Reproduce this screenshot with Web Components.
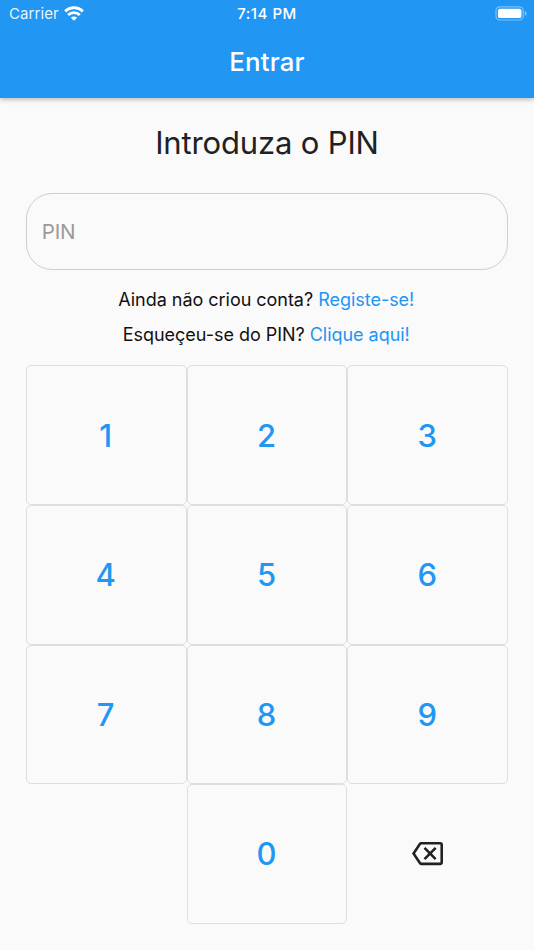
<!DOCTYPE html>
<html lang="pt">
<head>
<meta charset="UTF-8">
<meta name="viewport" content="width=device-width, initial-scale=1">
<title>Entrar</title>
<style>
  body {
    margin: 0;
    background: #fafafa;
    font-family: Inter, "Liberation Sans", sans-serif;
  }
</style>
</head>
<body>
<login-page></login-page>

<script>
class StatusBar extends HTMLElement {
  connectedCallback() {
    const shadow = this.attachShadow({ mode: "open" });
    shadow.innerHTML = `
      <style>
        :host {
          display: grid;
          grid-template-columns: 1fr auto 1fr;
          align-items: center;
          height: 28px;
          padding: 0 7px 0 9px;
          color: #fff;
          font-size: 15px;
          line-height: 28px;
        }
        .carrier {
          display: flex;
          align-items: center;
          gap: 5px;
          color: rgba(255, 255, 255, 0.92);
          letter-spacing: 0.1px;
        }
        .time {
          margin-right: 2px;
          font-weight: 500;
          font-size: 15px;
          letter-spacing: 0.5px;
        }
        .battery {
          justify-self: end;
        }
        svg {
          display: block;
        }
      </style>
      <div class="carrier">
        <span>${this.getAttribute("carrier")}</span>
        <svg width="20" height="16" viewBox="0 0 20 16" fill="none" stroke="#fff" stroke-width="2.9">
          <path d="M1.2 5.4a12.5 12.5 0 0 1 17.6 0" />
          <path d="M4.2 9a8.2 8.2 0 0 1 11.6 0" />
          <path d="M10 14.8l-3.1-3.1a4.4 4.4 0 0 1 6.2 0z" fill="#fff" stroke="none" />
        </svg>
      </div>
      <div class="time">${this.getAttribute("time")}</div>
      <svg class="battery" width="32" height="16" viewBox="0 0 32 16">
        <rect x="1" y=".8" width="27.2" height="13.2" rx="3.8" fill="none" stroke="#fff" stroke-opacity=".42" stroke-width="1.2" />
        <rect x="2.9" y="2.7" width="23.6" height="9.4" rx="2.2" fill="#fff" />
        <path d="M29.9 5.1a2.6 2.6 0 0 1 0 4.8z" fill="#fff" fill-opacity=".5" />
      </svg>
    `;
  }
}

class AppBar extends HTMLElement {
  connectedCallback() {
    const shadow = this.attachShadow({ mode: "open" });
    shadow.innerHTML = `
      <style>
        :host {
          display: block;
          height: 98px;
          background: #2196f3;
          box-shadow: 0 1px 6px rgba(0, 0, 0, 0.22), 0 2px 3px rgba(0, 0, 0, 0.08);
        }
        h1 {
          margin: 0;
          height: 70px;
          line-height: 68px;
          text-align: center;
          color: #fff;
          font-size: 25.8px;
          font-weight: 500;
          letter-spacing: 0.2px;
        }
      </style>
      <slot name="status"></slot>
      <h1><slot></slot></h1>
    `;
  }
}

class PinField extends HTMLElement {
  connectedCallback() {
    const shadow = this.attachShadow({ mode: "open" });
    shadow.innerHTML = `
      <style>
        :host {
          display: flex;
          align-items: center;
          box-sizing: border-box;
          height: 77px;
          padding: 0 15px;
          border: 1px solid #cfcfcf;
          border-radius: 26px;
          color: #9b9b9b;
          font-size: 20.6px;
          letter-spacing: -0.2px;
        }
      </style>
      <span>${this.getAttribute("placeholder")}</span>
    `;
  }
}

class HelpLine extends HTMLElement {
  connectedCallback() {
    const shadow = this.attachShadow({ mode: "open" });
    shadow.innerHTML = `
      <style>
        :host {
          display: block;
          height: 35px;
          padding-right: 1.5px;
          line-height: 35px;
          text-align: center;
          white-space: nowrap;
          color: #111;
          font-size: 18px;
          letter-spacing: -0.03px;
        }
        a {
          color: #2196f3;
          text-decoration: none;
        }
      </style>
      <slot></slot> <a href="#">${this.getAttribute("action")}</a>
    `;
  }
}

class PinKey extends HTMLElement {
  connectedCallback() {
    const shadow = this.attachShadow({ mode: "open" });
    shadow.innerHTML = `
      <style>
        :host {
          display: flex;
          align-items: center;
          justify-content: center;
          box-sizing: border-box;
          padding-right: 1px;
          border: 1px solid #dedede;
          border-radius: 5px;
          color: #2196f3;
          font-size: 31px;
          font-weight: 500;
          cursor: pointer;
        }
        :host([plain]) {
          padding: 0;
          border-color: transparent;
        }
      </style>
      <slot></slot>
    `;
  }
}

class PinPad extends HTMLElement {
  connectedCallback() {
    const shadow = this.attachShadow({ mode: "open" });
    let keys = "";
    [1, 2, 3, 4, 5, 6, 7, 8, 9].forEach((n) => {
      keys += `<pin-key>${n}</pin-key>`;
    });

    shadow.innerHTML = `
      <style>
        :host {
          display: grid;
          grid-template-columns: repeat(3, 1fr);
          grid-template-rows: repeat(4, 139.6px);
        }
        svg {
          display: block;
        }
      </style>
      ${keys}
      <span></span>
      <pin-key>0</pin-key>
      <pin-key plain>
        <svg width="31" height="31" viewBox="0 0 24 24" fill="#212121">
          <path d="M22 3H7c-.69 0-1.23.35-1.59.88L0 12l5.41 8.11c.36.53.9.89 1.59.89h15c1.1 0 2-.9 2-2V5c0-1.1-.9-2-2-2zm0 16H7.07L2.4 12l4.66-7H22v14zm-11.59-2L14 13.41 17.59 17 19 15.59 15.41 12 19 8.41 17.59 7 14 10.59 10.41 7 9 8.41 12.59 12 9 15.59z" />
        </svg>
      </pin-key>
    `;
  }
}

class LoginPage extends HTMLElement {
  connectedCallback() {
    const shadow = this.attachShadow({ mode: "open" });
    shadow.innerHTML = `
      <style>
        :host {
          display: block;
          height: 950px;
          overflow: hidden;
        }
        main {
          padding: 0 25.8px;
        }
        h2 {
          margin: 0;
          padding-top: 25px;
          height: 70.4px;
          line-height: 40px;
          text-align: center;
          color: #212121;
          font-size: 31px;
          font-weight: 400;
          letter-spacing: -0.15px;
        }
        .help {
          padding: 12px 0 13px;
        }
      </style>
      <app-bar>
        <status-bar slot="status" carrier="Carrier" time="7:14 PM"></status-bar>
        Entrar
      </app-bar>
      <main>
        <h2>Introduza o PIN</h2>
        <pin-field placeholder="PIN"></pin-field>
        <div class="help">
          <help-line action="Registe-se!">Ainda não criou conta?</help-line>
          <help-line action="Clique aqui!">Esqueçeu-se do PIN?</help-line>
        </div>
        <pin-pad></pin-pad>
      </main>
    `;
  }
}

customElements.define("status-bar", StatusBar);
customElements.define("app-bar", AppBar);
customElements.define("pin-field", PinField);
customElements.define("help-line", HelpLine);
customElements.define("pin-key", PinKey);
customElements.define("pin-pad", PinPad);
customElements.define("login-page", LoginPage);
</script>
</body>
</html>
